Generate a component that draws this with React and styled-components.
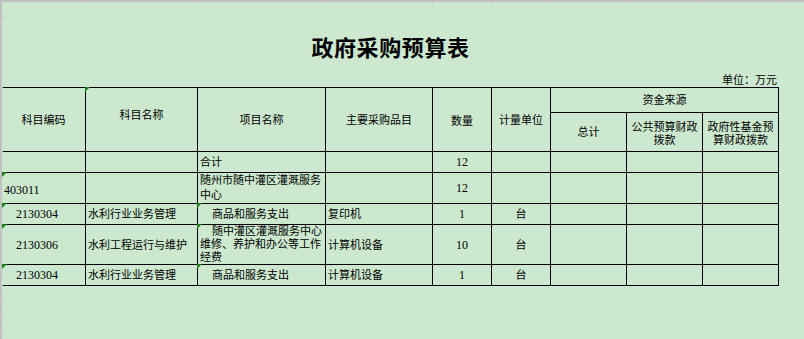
import React from "react";
import styled, { createGlobalStyle } from "styled-components";

const GlobalStyle = createGlobalStyle`
  html, body {
    margin: 0;
    padding: 0;
    background: #cce8cf;
  }
`;

const Sheet = styled.div`
  position: relative;
  width: 804px;
  height: 339px;
  box-sizing: border-box;
  overflow: hidden;
  background: #cce8cf;
  border-top: 2px solid #c2c2c2;
  border-left: 2px solid #c2c2c2;
  font-family: "Liberation Serif", "Noto Sans CJK SC", serif;
  font-size: 11px;
  color: #000;
`;

const ColTick = styled.span`
  position: absolute;
  top: -2px;
  left: ${(p) => p.$x - 2}px;
  width: 1px;
  height: 3px;
  background: #a8a8a8;
`;

const RowTick = styled.span`
  position: absolute;
  left: -2px;
  top: ${(p) => p.$y - 2}px;
  width: 3px;
  height: 1px;
  background: #a8a8a8;
`;

const Selected = styled.span`
  position: absolute;
  top: -2px;
  left: 548px;
  width: 77px;
  height: 2px;
  background: #48a848;
`;

const Title = styled.h1`
  margin: 0;
  padding-top: 31px;
  width: 777px;
  text-align: center;
  font-family: "Noto Sans CJK SC", sans-serif;
  font-size: 22px;
  font-weight: 700;
  letter-spacing: 0.6px;
  line-height: 26px;
`;

const Unit = styled.div`
  margin-top: 14px;
  width: 775px;
  text-align: right;
  line-height: 14px;
`;

const Grid = styled.div`
  display: grid;
  grid-template-columns: 83px 111px 127px 106px 58px 58px 75px 75px 75px;
  grid-template-rows: 24px 38px 20px 30px 20px 39px 20px;
  gap: 1px;
  width: max-content;
  padding: 1px 1px 1px 0;
  background: #000;
`;

const Cell = styled.div`
  position: relative;
  background: #cce8cf;
  display: flex;
  flex-direction: column;
  justify-content: center;
  align-items: ${(p) => (p.$left ? "flex-start" : "center")};
  text-align: ${(p) => (p.$left ? "left" : "center")};
  padding: ${(p) => p.$pt || 0}px 2px ${(p) => p.$pb || 0}px
    ${(p) => 2 + (p.$indent || 0)}px;
  grid-column: ${(p) => p.$col || "auto"};
  grid-row: ${(p) => p.$row || "auto"};
  line-height: ${(p) => p.$lh || 14}px;
  white-space: nowrap;
`;

const Line = styled.span`
  display: block;
  padding-left: ${(p) => p.$indent || 0}px;
`;

const Num = styled.span`
  font-size: 12px;
`;

const Marker = styled.span`
  position: absolute;
  top: -1px;
  left: ${(p) => (p.$edge ? 0 : -1)}px;
  width: 0;
  height: 0;
  border-top: 5px solid #1e7d1e;
  border-right: 5px solid transparent;
`;

const colTicks = [85, 197, 325, 432, 491, 550, 626, 702, 778];
const rowTicks = [16, 87, 112, 151, 172, 203, 224, 264, 285, 300, 315, 330];

const rows = [
  { code: "", name: "", proj: ["合计"], item: "", qty: "12", unit: "" },
  {
    code: "403011",
    flush: true,
    mark: true,
    low: 3,
    name: "",
    proj: ["随州市随中灌区灌溉服务", "中心"],
    lh: 15,
    item: "",
    qty: "12",
    unit: "",
  },
  {
    code: "2130304",
    mark: true,
    projMark: true,
    name: "水利行业业务管理",
    proj: ["商品和服务支出"],
    indentFirst: true,
    item: "复印机",
    qty: "1",
    unit: "台",
  },
  {
    code: "2130306",
    mark: true,
    projMark: true,
    name: "水利工程运行与维护",
    proj: ["随中灌区灌溉服务中心", "维修、养护和办公等工作", "经费"],
    indentFirst: true,
    lh: 13,
    item: "计算机设备",
    qty: "10",
    unit: "台",
  },
  {
    code: "2130304",
    mark: true,
    projMark: true,
    name: "水利行业业务管理",
    proj: ["商品和服务支出"],
    indentFirst: true,
    item: "计算机设备",
    qty: "1",
    unit: "台",
  },
];

const App = () => {
  return (
    <>
      <GlobalStyle />
      <Sheet>
        {colTicks.map((x) => (
          <ColTick key={x} $x={x} />
        ))}
        {rowTicks.map((y) => (
          <RowTick key={y} $y={y} />
        ))}
        <Selected />

        <Title>政府采购预算表</Title>
        <Unit>单位：万元</Unit>

        <Grid>
          <Cell $col="1" $row="1 / 3">科目编码</Cell>
          <Cell $col="2" $row="1 / 3" $pb={10}>
            <Marker />
            科目名称
          </Cell>
          <Cell $col="3" $row="1 / 3">项目名称</Cell>
          <Cell $col="4" $row="1 / 3">主要采购品目</Cell>
          <Cell $col="5" $row="1 / 3" $pt={3}>数量</Cell>
          <Cell $col="6" $row="1 / 3">计量单位</Cell>
          <Cell $col="7 / 10" $row="1">资金来源</Cell>
          <Cell $col="7" $row="2">总计</Cell>
          <Cell $col="8" $row="2" $lh={13} $pt={4}>
            <Line>公共预算财政</Line>
            <Line>拨款</Line>
          </Cell>
          <Cell $col="9" $row="2" $lh={13} $pt={4}>
            <Line>政府性基金预</Line>
            <Line>算财政拨款</Line>
          </Cell>

          {rows.map((r, i) => (
            <React.Fragment key={i}>
              <Cell $left $pt={r.low} $indent={r.flush || !r.code ? 0 : 12}>
                {r.mark && <Marker $edge />}
                <Num>{r.code}</Num>
              </Cell>
              <Cell $left>{r.name}</Cell>
              <Cell $left $lh={r.lh}>
                {r.projMark && <Marker />}
                {r.proj.map((t, j) => (
                  <Line key={j} $indent={r.indentFirst && j === 0 ? 12 : 0}>
                    {t}
                  </Line>
                ))}
              </Cell>
              <Cell $left>{r.item}</Cell>
              <Cell>
                <Num>{r.qty}</Num>
              </Cell>
              <Cell>{r.unit}</Cell>
              <Cell />
              <Cell />
              <Cell />
            </React.Fragment>
          ))}
        </Grid>
      </Sheet>
    </>
  );
};

export default App;
